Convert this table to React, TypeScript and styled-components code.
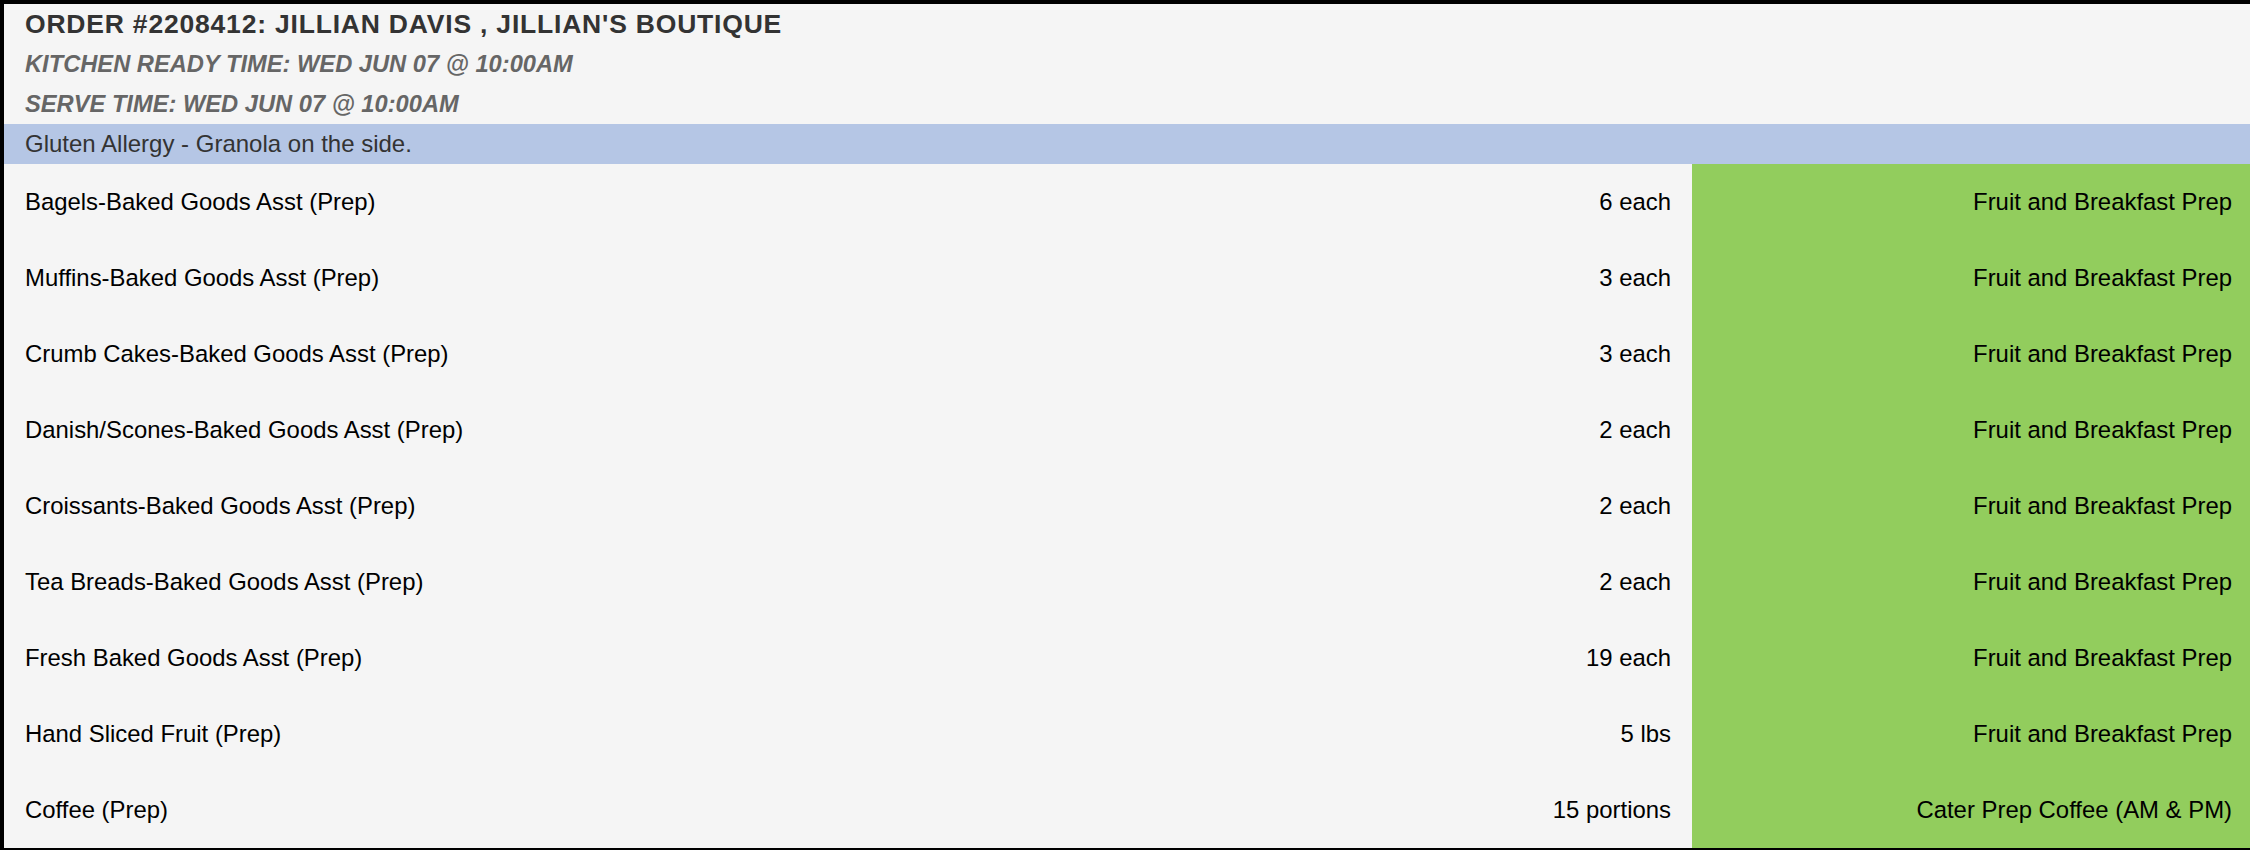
import React from "react";
import styled, { createGlobalStyle } from "styled-components";

const GlobalStyle = createGlobalStyle`
  html, body {
    margin: 0;
    padding: 0;
    background: #f5f5f5;
    overflow: hidden;
  }
  * { box-sizing: border-box; }
`;

const Ticket = styled.div`
  width: 2250px;
  background: #f5f5f5;
  border-top: 4px solid #000;
  border-left: 4px solid #000;
  border-bottom: 4px solid #000;
  font-family: "Liberation Sans", Arial, Helvetica, sans-serif;
`;

const Header = styled.div`
  display: flex;
  flex-direction: column;
  padding-left: 21px;
`;

const Title = styled.div`
  height: 40px;
  line-height: 40px;
  font-size: 26.5px;
  font-weight: 700;
  letter-spacing: 0.8px;
  color: #333;
  white-space: nowrap;
`;

const SubTitle = styled.div`
  height: 40px;
  line-height: 40px;
  font-size: 23.7px;
  font-weight: 700;
  font-style: italic;
  color: #666;
  white-space: nowrap;
`;

const Note = styled.div`
  height: 40px;
  line-height: 40px;
  padding-left: 21px;
  background: #b5c6e5;
  color: #333;
  font-size: 24px;
`;

const Items = styled.div`
  display: grid;
  grid-template-columns: 1fr auto 558px;
  grid-auto-rows: 76px;
`;

const Cell = styled.div<{ $align?: "left" | "right" }>`
  display: flex;
  align-items: center;
  justify-content: ${(p) => (p.$align === "right" ? "flex-end" : "flex-start")};
  font-size: 23.9px;
  color: #000;
  white-space: nowrap;
`;

const NameCell = styled(Cell)`
  padding-left: 21px;
`;

const QtyCell = styled(Cell)`
  padding-right: 21px;
`;

const StationCell = styled(Cell)`
  background: #92cd5d;
  padding-right: 18px;
`;

const items = [
  ["Bagels-Baked Goods Asst (Prep)", "6 each", "Fruit and Breakfast Prep"],
  ["Muffins-Baked Goods Asst (Prep)", "3 each", "Fruit and Breakfast Prep"],
  ["Crumb Cakes-Baked Goods Asst (Prep)", "3 each", "Fruit and Breakfast Prep"],
  ["Danish/Scones-Baked Goods Asst (Prep)", "2 each", "Fruit and Breakfast Prep"],
  ["Croissants-Baked Goods Asst (Prep)", "2 each", "Fruit and Breakfast Prep"],
  ["Tea Breads-Baked Goods Asst (Prep)", "2 each", "Fruit and Breakfast Prep"],
  ["Fresh Baked Goods Asst (Prep)", "19 each", "Fruit and Breakfast Prep"],
  ["Hand Sliced Fruit (Prep)", "5 lbs", "Fruit and Breakfast Prep"],
  ["Coffee (Prep)", "15 portions", "Cater Prep Coffee (AM & PM)"],
];

export default function App() {
  return (
    <>
      <GlobalStyle />
      <Ticket>
        <Header>
          <Title>ORDER #2208412: JILLIAN DAVIS , JILLIAN'S BOUTIQUE</Title>
          <SubTitle>KITCHEN READY TIME: WED JUN 07 @ 10:00AM</SubTitle>
          <SubTitle>SERVE TIME: WED JUN 07 @ 10:00AM</SubTitle>
        </Header>
        <Note>Gluten Allergy - Granola on the side.</Note>
        <Items>
          {items.map(([name, qty, station]) => (
            <React.Fragment key={name}>
              <NameCell>{name}</NameCell>
              <QtyCell $align="right">{qty}</QtyCell>
              <StationCell $align="right">{station}</StationCell>
            </React.Fragment>
          ))}
        </Items>
      </Ticket>
    </>
  );
}
